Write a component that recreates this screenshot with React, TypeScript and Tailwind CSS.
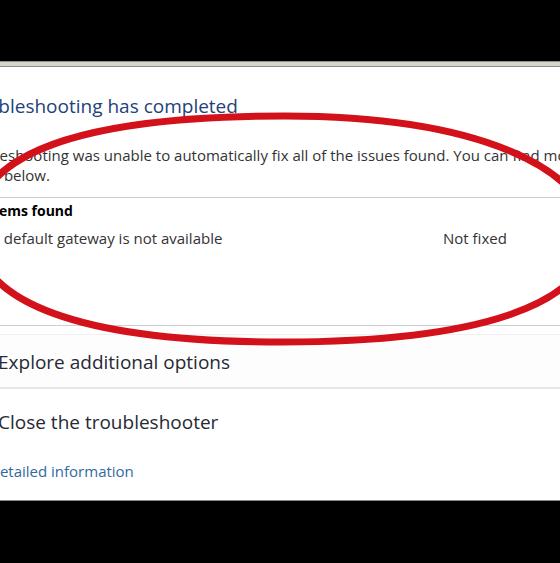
import React from "react";

const font = { fontFamily: '"Open Sans", "Noto Sans", sans-serif' };

// 手描きの赤い楕円（スクリーンショットへの書き込み）
function RedEllipse() {
  return (
    <svg
      className="pointer-events-none absolute left-0 top-0"
      width="560"
      height="563"
      viewBox="0 0 560 563"
    >
      <path
        d="M -25 229 C -25 154, 80 116, 285 116 C 480 116, 590 170, 590 236 C 590 304, 480 342, 282 342 C 84 342, -25 304, -25 229 Z"
        fill="none"
        stroke="#d3111b"
        strokeWidth="7"
      />
    </svg>
  );
}

export default function App() {
  return (
    <div
      className="relative flex h-[563px] w-[560px] flex-col overflow-hidden bg-black"
      style={font}
    >
      <div className="h-[61px] shrink-0 bg-black" />
      <div className="h-[6px] shrink-0 border-y border-[#8e8d86] bg-[#d6d5cd]" />

      <div className="flex h-[433px] shrink-0 flex-col bg-white">
        <div className="ml-[-43px] mt-[27px] whitespace-nowrap text-[19px] leading-[24px] text-[#24417a]">
          Troubleshooting has completed
        </div>

        <div className="ml-[-46px] mt-[27px] whitespace-nowrap text-[15px] leading-[20px] text-[#333]">
          Troubleshooting was unable to automatically fix all of the issues found. You can find more
          <br />
          details below.
        </div>

        <div className="mt-[12px] flex h-[129px] flex-col border-y border-[#cfcfcf] pt-[4px]">
          <div className="ml-[-38px] whitespace-nowrap text-[14px] font-bold leading-[17px] text-black">
            Problems found
          </div>
          <div className="mt-[9px] flex whitespace-nowrap text-[15px] leading-[20px] text-[#333]">
            <span className="ml-[-26px] w-[469px]">The default gateway is not available</span>
            <span>Not fixed</span>
          </div>
        </div>

        <div className="mt-[8px] flex h-[53px] flex-col border-t border-[#eef0f1] bg-[#fdfdfe]">
          <div className="ml-[-2px] mt-[15px] whitespace-nowrap text-[19px] leading-[24px] text-[#262a33]">
            Explore additional options
          </div>
        </div>
        <div className="h-[2px] bg-[#e1e8ec]" />

        <div className="ml-[-2px] mt-[21px] whitespace-nowrap text-[19px] leading-[24px] text-[#262a33]">
          Close the troubleshooter
        </div>

        <div className="ml-[-11px] mt-[27px] whitespace-nowrap text-[15px] leading-[20px] text-[#2f6a9e]">
          Detailed information
        </div>
      </div>

      <div className="h-px shrink-0 bg-[#8a8a8a]" />
      <div className="flex-1 bg-black" />

      <RedEllipse />
    </div>
  );
}
